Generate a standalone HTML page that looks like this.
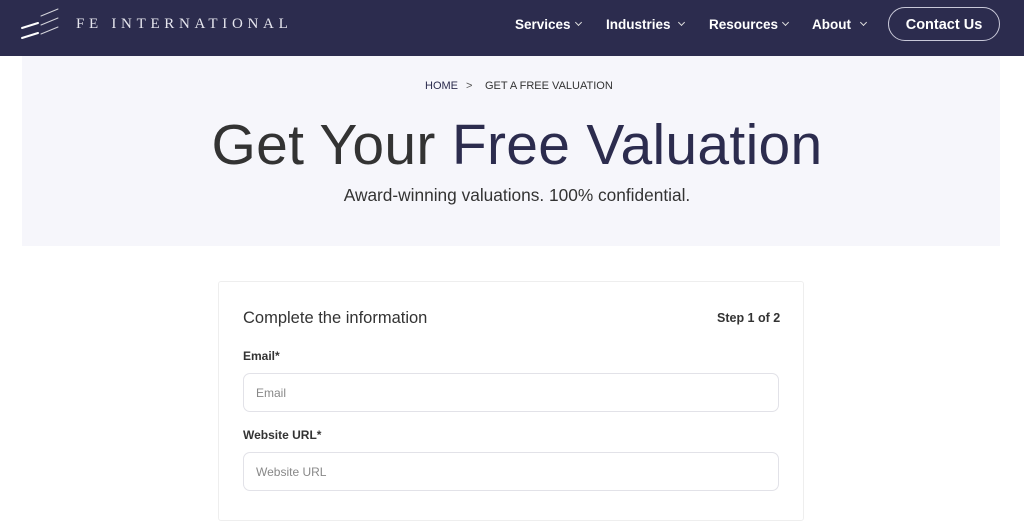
<!DOCTYPE html>
<html><head><meta charset="utf-8"><style>
*{margin:0;padding:0;box-sizing:border-box}
body{width:1024px;height:503px;overflow:hidden;background:#fff;font-family:"Liberation Sans",sans-serif;position:relative}
.nav{position:absolute;left:0;top:0;width:1024px;height:56px;background:#2c2c4e}
.logo{position:absolute;left:76px;top:16px;font-family:"Liberation Serif",serif;color:#e6e6ee;font-size:15px;letter-spacing:4.7px}
.ni{position:absolute;top:17px;color:#fff;font-size:13.5px;font-weight:bold}
.ch{position:absolute;top:20px;width:5px;height:5px;border-right:1.5px solid #ddd;border-bottom:1.5px solid #ddd;transform:rotate(45deg)}
.btn{position:absolute;left:888px;top:7px;width:112px;height:34px;border:1px solid #c8c8d8;border-radius:17px;color:#fff;font-size:14.5px;font-weight:bold;text-align:center;line-height:34px}
.hero{position:absolute;left:22px;top:56px;width:978px;height:190px;background:#f6f6fb}
.bc{position:absolute;top:80px;font-size:11px;color:#333}
h1{position:absolute;left:0;width:1034px;text-align:center;top:112px;font-size:57px;font-weight:normal;color:#333;letter-spacing:0.3px}
h1 span{color:#2c2c4e}
.sub{position:absolute;left:0;width:1034px;text-align:center;top:185px;font-size:17.3px;color:#333}
.card{position:absolute;left:218px;top:281px;width:586px;height:240px;border:1px solid #eee;border-radius:3px}
.t{position:absolute;font-size:16.5px;color:#333}
.l{position:absolute;font-size:12px;color:#333;font-weight:bold}
.in{position:absolute;left:243px;width:536px;height:39px;border:1px solid #e2e2e8;border-radius:7px;font-size:12px;color:#888;padding:12px 0 0 12px}
</style></head><body>
<div class="nav">
<svg style="position:absolute;left:20px;top:6px" width="42" height="36" viewBox="0 0 42 36"><g stroke="#fff" stroke-linecap="round"><line x1="2" y1="22" x2="18" y2="17" stroke-width="2"/><line x1="2" y1="32" x2="18" y2="27" stroke-width="2"/><line x1="21" y1="10" x2="38" y2="3" stroke-width="1" opacity=".8"/><line x1="21" y1="19" x2="38" y2="12" stroke-width="1" opacity=".8"/><line x1="21" y1="28" x2="38" y2="21" stroke-width="1" opacity=".8"/></g></svg>
<div class="logo">FE INTERNATIONAL</div>
<div class="ni" style="left:515px">Services</div><div class="ch" style="left:576px"></div>
<div class="ni" style="left:606px">Industries</div><div class="ch" style="left:679px"></div>
<div class="ni" style="left:709px">Resources</div><div class="ch" style="left:783px"></div>
<div class="ni" style="left:812px">About</div><div class="ch" style="left:861px"></div>
<div class="btn">Contact Us</div>
</div>
<div class="hero"></div>
<div class="bc" style="left:425px;color:#2c2c4e">HOME</div>
<div class="bc" style="left:466px;color:#555">&gt;</div>
<div class="bc" style="left:485px">GET A FREE VALUATION</div>
<h1>Get Your <span>Free Valuation</span></h1>
<div class="sub">Award-winning valuations. 100% confidential.</div>
<div class="card"></div>
<div class="t" style="left:243px;top:309px">Complete the information</div>
<div class="t" style="left:717px;top:311px;font-size:12.5px;font-weight:bold">Step 1 of 2</div>
<div class="l" style="left:243px;top:349px">Email*</div>
<div class="in" style="top:373px">Email</div>
<div class="l" style="left:243px;top:428px">Website URL*</div>
<div class="in" style="top:452px">Website URL</div>
</body></html>
